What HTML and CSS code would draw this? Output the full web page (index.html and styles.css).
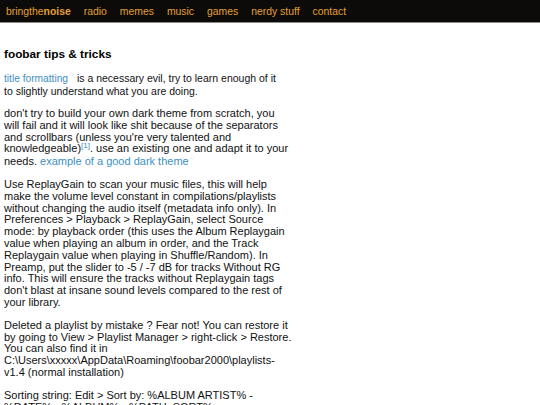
FILE: index.html
```html
<!DOCTYPE html>
<html>
<head>
<meta charset="utf-8">
<link rel="stylesheet" href="styles.css">
</head>
<body>
<nav class="topbar">
  <a class="brand" href="#">bringthe<b>noise</b></a>
  <a href="#">radio</a>
  <a href="#">memes</a>
  <a href="#">music</a>
  <a href="#">games</a>
  <a href="#">nerdy stuff</a>
  <a href="#">contact</a>
</nav>
<main class="content">
  <h1>foobar tips &amp; tricks</h1>
  <p class="intro"><a class="ext" href="#">title formatting</a><svg class="exticon" viewBox="0 0 8 8"><path d="M4 0.8 L7.2 4 L4 7.2 L0.8 4 Z" fill="none" stroke="#d6e0ea" stroke-width="1"/></svg> is a necessary evil, try to learn enough of it to slightly understand what you are doing.</p>
  <p>don't try to build your own dark theme from scratch, you will fail and it will look like shit because of the separators and scrollbars (unless you're very talented and knowledgeable)<sup><a href="#">[1]</a></sup>. use an existing one and adapt it to your needs. <a class="ext" href="#">example of a good dark theme</a><svg class="exticon" viewBox="0 0 8 8"><path d="M4 0.8 L7.2 4 L4 7.2 L0.8 4 Z" fill="none" stroke="#d6e0ea" stroke-width="1"/></svg></p>
  <p>Use ReplayGain to scan your music files, this will help make the volume level constant in compilations/playlists without changing the audio itself (metadata info only). In Preferences &gt; Playback &gt; ReplayGain, select Source mode: by playback order (this uses the Album Replaygain value when playing an album in order, and the Track Replaygain value when playing in Shuffle/Random). In Preamp, put the slider to -5 / -7 dB for tracks Without RG info. This will ensure the tracks without Replaygain tags don't blast at insane sound levels compared to the rest of your library.</p>
  <p>Deleted a playlist by mistake ? Fear not! You can restore it by going to View &gt; Playlist Manager &gt; right-click &gt; Restore. You can also find it in C:\Users\xxxxx\AppData\Roaming\foobar2000\playlists-v1.4 (normal installation)</p>
  <p>Sorting string: Edit &gt; Sort by: %ALBUM ARTIST% - <span class="nowrap">%DATE% - %ALBUM% - %PATH_SORT%</span></p>
</main>
</body>
</html>
```
FILE: styles.css
```css
html, body {
  margin: 0;
  padding: 0;
  background: #ffffff;
  font-family: "Liberation Sans", Arial, sans-serif;
}
.topbar {
  display: flex;
  align-items: center;
  height: 22px;
  background: #0c0b0a;
  border-bottom: 1px solid #8a8a8a;
  padding-left: 6px;
  gap: 13px;
}
.topbar a {
  color: #e3a034;
  text-decoration: none;
  font-size: 10.4px;
}
.topbar .brand b {
  font-weight: bold;
}
.content {
  width: 288px;
  padding: 24px 0 0 4px;
  color: #111;
  font-size: 11px;
}
h1 {
  font-size: 11.8px;
  font-weight: bold;
  margin: 0 0 11px 0;
  color: #000;
}
p {
  margin: 0 0 11px 0;
  line-height: 11.8px;
}
p.intro {
  max-width: 280px;
  font-size: 10.5px;
  line-height: 12px;
}
p.intro .ext {
  font-size: 10.2px;
}
.nowrap {
  white-space: nowrap;
}
a {
  color: #3d8fc4;
  text-decoration: none;
}
sup {
  font-size: 8px;
  line-height: 0;
  vertical-align: 4px;
}
.exticon {
  width: 5px;
  height: 5px;
  margin-left: 1px;
  vertical-align: 5px;
}
```
